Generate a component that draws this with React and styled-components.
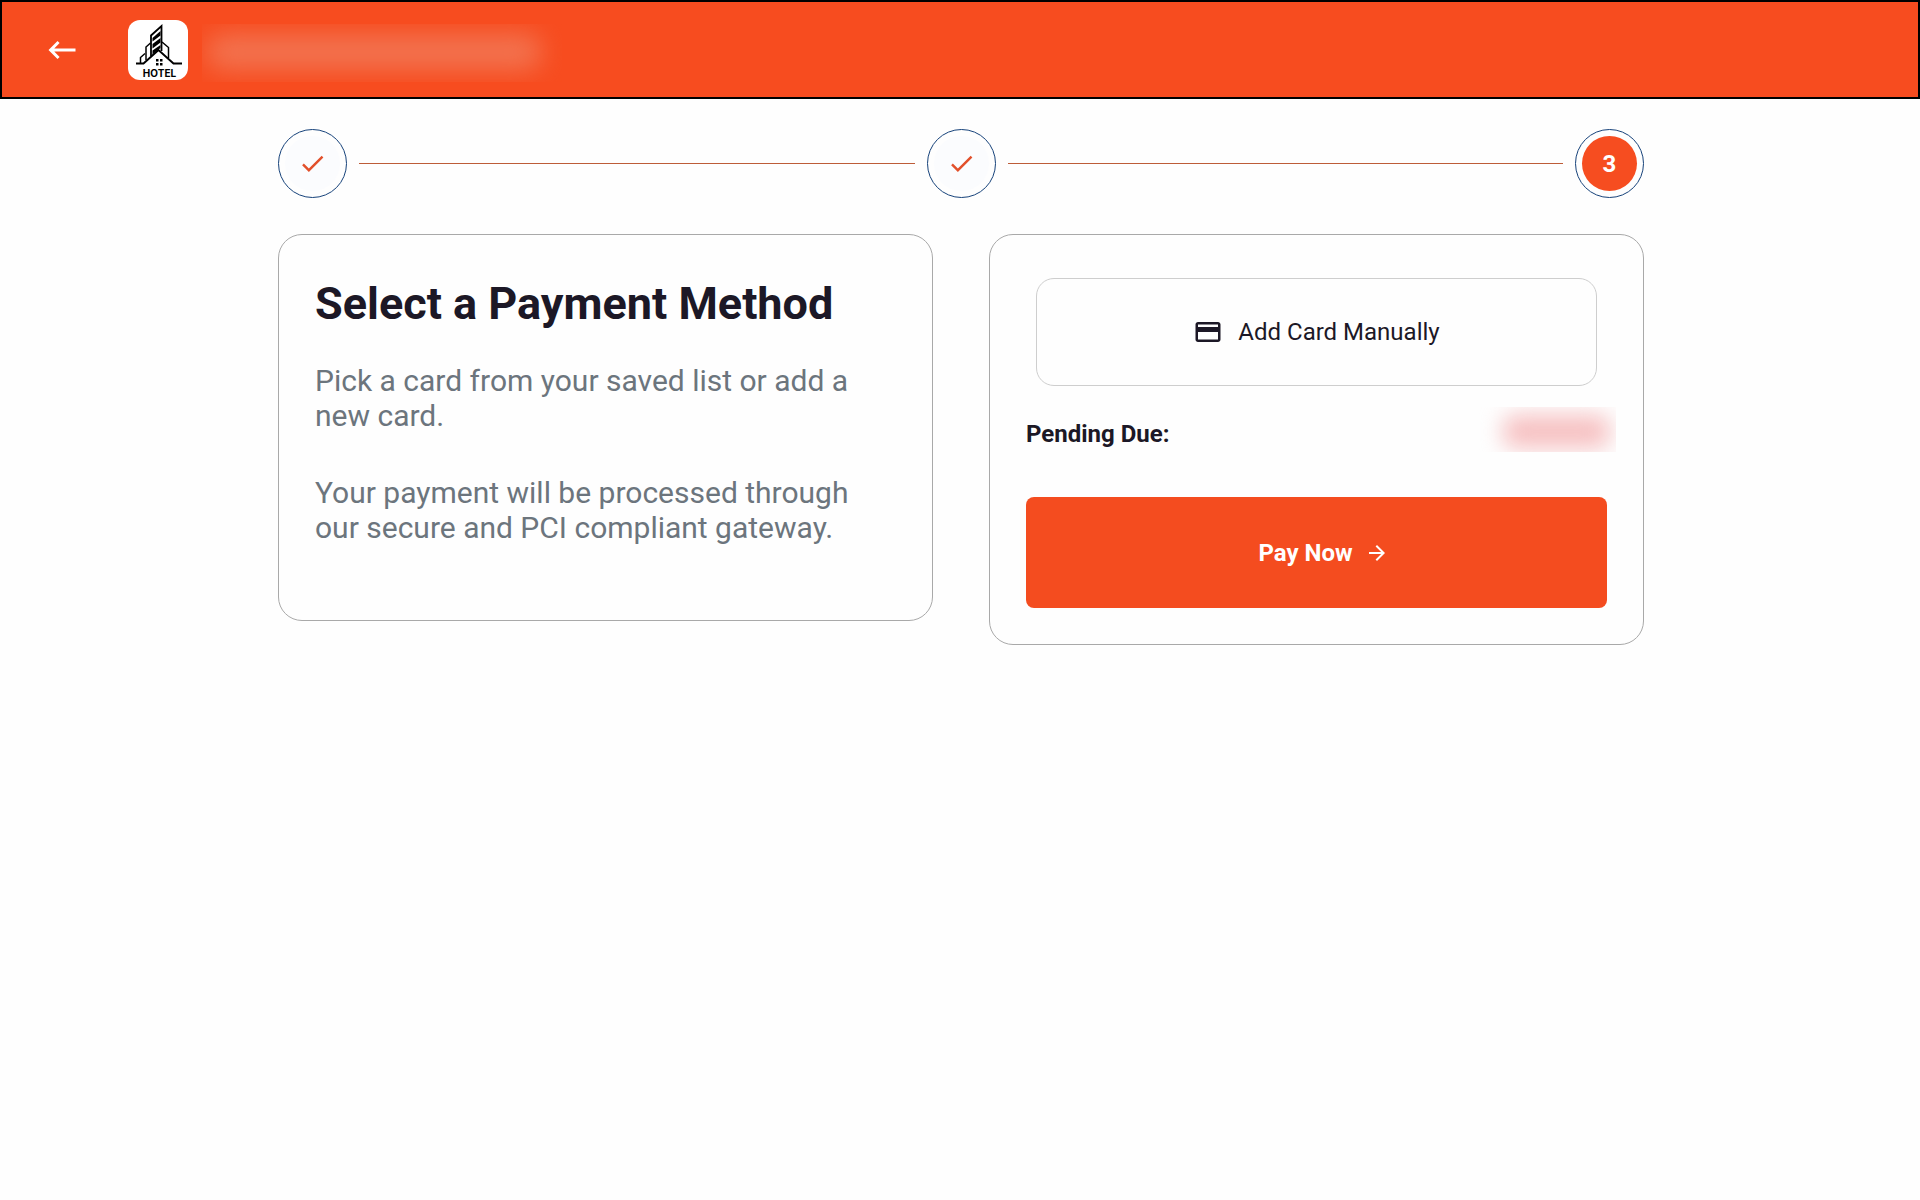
import React from 'react';
import styled, { createGlobalStyle } from 'styled-components';
import {
  MdArrowForward,
  MdCheck,
  MdCreditCard,
  MdKeyboardBackspace,
} from 'react-icons/md';

const steps = [
  { id: 1, done: true },
  { id: 2, done: true },
  { id: 3, done: false },
];

const HotelLogo = () => (
  <LogoSvg viewBox="0 0 60 60" role="img" aria-label="Hotel">
    <g fill="none" stroke="#000" strokeWidth="1.8">
      <path d="M8 43.5H15.5L30.5 30L45.5 43.5H54" strokeWidth="2" />
      <path d="M23 36V15.5L33.5 6V31" />
      <path d="M18 40V27L22.5 23" strokeWidth="1.5" />
      <path d="M12.5 43V37.5L17 33.5" strokeWidth="1.5" />
      <path d="M34 22L40.5 27.5V38" strokeWidth="1.5" />
    </g>
    <path d="M24.5 18L32.5 11V15.5L24.5 21.5Z" />
    <path d="M24.5 24L32.5 18V22.5L24.5 28.5Z" />
    <path d="M24.5 30.5L32.5 25V28L24.5 34.5Z" />
    <path d="M28 39h2.5v2.5h-2.5zM32 39h2.5v2.5h-2.5zM28 43h2.5v2.5h-2.5zM32 43h2.5v2.5h-2.5z" />
    <text x="31.5" y="57" textAnchor="middle">
      HOTEL
    </text>
  </LogoSvg>
);

const App = () => {
  return (
    <>
      <GlobalStyle />
      <Header>
        <BackButton type="button" aria-label="Back">
          <MdKeyboardBackspace size={36} />
        </BackButton>
        <HotelLogo />
        <HiddenName />
      </Header>
      <Main>
        <Stepper>
          {steps.map((step, i) => (
            <React.Fragment key={step.id}>
              {i > 0 && <StepLine />}
              <Step>
                <StepInner $done={step.done}>
                  {step.done ? <MdCheck size={29} /> : step.id}
                </StepInner>
              </Step>
            </React.Fragment>
          ))}
        </Stepper>
        <Columns>
          <InfoCard>
            <Title>Select a Payment Method</Title>
            <Text>Pick a card from your saved list or add a new card.</Text>
            <Text>
              Your payment will be processed through our secure and PCI
              compliant gateway.
            </Text>
          </InfoCard>
          <PayCard>
            <AddCardButton type="button">
              <MdCreditCard size={30} />
              Add Card Manually
            </AddCardButton>
            <DueRow>
              <DueLabel>Pending Due:</DueLabel>
              <HiddenAmount />
            </DueRow>
            <PayButton type="button">
              Pay Now
              <MdArrowForward size={24} />
            </PayButton>
          </PayCard>
        </Columns>
      </Main>
    </>
  );
};

export default App;

const GlobalStyle = createGlobalStyle`
  * {
    box-sizing: border-box;
  }

  body {
    margin: 0;
    background-color: #fefefe;
    color: #1c1826;
    font-family: Roboto, sans-serif;
  }

  button {
    font-family: inherit;
    cursor: pointer;
  }
`;

const Header = styled.header`
  display: flex;
  align-items: center;
  height: 99px;
  padding: 0 42px;
  border: 2px solid #000;
  background-color: #f74c1f;
`;

const BackButton = styled.button`
  display: flex;
  margin-right: 48px;
  padding: 0;
  border: none;
  background: none;
  color: #fff;
`;

const LogoSvg = styled.svg`
  flex-shrink: 0;
  width: 60px;
  height: 60px;
  border-radius: 12px;
  background-color: #fff;

  text {
    font: 700 10px Inter, sans-serif;
  }
`;

const HiddenName = styled.div`
  width: 360px;
  height: 58px;
  margin: 6px 0 0 14px;
  padding: 10px 20px 12px 4px;
  overflow: hidden;

  &::before {
    content: '';
    display: block;
    height: 100%;
    border-radius: 16px;
    background-color: #f27350;
    filter: blur(13px);
  }
`;

const Main = styled.main`
  max-width: 1368px;
  margin: 0 auto;
  padding: 30px 0 30px 2px;
`;

const Stepper = styled.div`
  display: flex;
  align-items: center;
  gap: 12px;
`;

const Step = styled.div`
  display: flex;
  flex-shrink: 0;
  width: 69px;
  height: 69px;
  padding: 6px;
  border: 1px solid #16427a;
  border-radius: 50%;
`;

const StepInner = styled.div`
  display: flex;
  flex: 1;
  align-items: center;
  justify-content: center;
  border-radius: 50%;
  background-color: ${({ $done }) => ($done ? '#fbfcfe' : '#f64d20')};
  color: ${({ $done }) => ($done ? '#e2502b' : '#fff')};
  font-size: 24px;
  font-weight: 700;
`;

const StepLine = styled.div`
  flex: 1;
  height: 1px;
  background-color: #bd5c38;
`;

const Columns = styled.div`
  display: grid;
  grid-template-columns: 1fr 1fr;
  align-items: start;
  gap: 56px;
  margin-top: 36px;
`;

const Card = styled.section`
  border: 1px solid #a9a9a9;
  border-radius: 24px;
`;

const InfoCard = styled(Card)`
  padding: 42px 36px 75px;
`;

const PayCard = styled(Card)`
  padding: 43px 36px 36px;
`;

const Title = styled.h1`
  margin: 0 0 33px;
  font-size: 45px;
  font-weight: 700;
  line-height: 53px;
`;

const Text = styled.p`
  margin: 0;
  color: #6c757d;
  font-size: 30px;
  line-height: 35px;

  & + & {
    margin-top: 42px;
  }
`;

const AddCardButton = styled.button`
  display: flex;
  align-items: center;
  justify-content: center;
  gap: 15px;
  width: calc(100% - 20px);
  height: 108px;
  margin: 0 10px;
  border: 1px solid #cecece;
  border-radius: 18px;
  background: none;
  color: inherit;
  font-size: 24px;
`;

const DueRow = styled.div`
  display: flex;
  align-items: center;
  justify-content: space-between;
  height: 45px;
  margin: 21px -9px 45px 0;
`;

const DueLabel = styled.span`
  padding-top: 8px;
  font-size: 24px;
  font-weight: 700;
`;

const HiddenAmount = styled.div`
  width: 137px;
  height: 45px;
  padding: 8px 6px 4px 24px;
  overflow: hidden;

  &::before {
    content: '';
    display: block;
    height: 100%;
    border-radius: 12px;
    background-color: #f6c0c1;
    filter: blur(11px);
  }
`;

const PayButton = styled.button`
  display: flex;
  align-items: center;
  justify-content: center;
  gap: 12px;
  width: 100%;
  height: 111px;
  padding: 0 0 0 14px;
  border: none;
  border-radius: 8px;
  background-color: #f44c1f;
  color: #fff;
  font-size: 24px;
  font-weight: 700;
`;
